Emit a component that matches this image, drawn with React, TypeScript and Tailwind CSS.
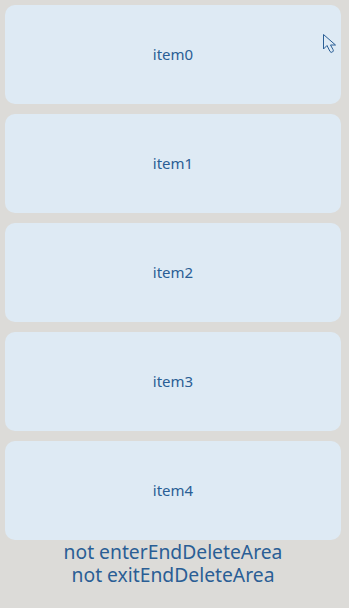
import React from "react";

export default function App() {
  const items = [0, 1, 2, 3, 4];
  return (
    <div className="w-[349px] h-[608px] bg-[#dcdbd8] overflow-hidden relative" style={{ fontFamily: '"Noto Sans", "Open Sans", sans-serif' }}>
      <div className="flex flex-col gap-[10px] px-[5px] pt-[5px] w-[346px]">
        {items.map((i) => (
          <div key={i} className="h-[99px] rounded-[10px] bg-[#deeaf4] flex items-center justify-center">
            <span className="text-[15px] text-[#2a5e95]">item{i}</span>
          </div>
        ))}
      </div>
      <div className="flex flex-col items-center text-[19.3px] leading-[23px] text-[#2a5e95] w-[346px]">
        <span>not enterEndDeleteArea</span>
        <span>not exitEndDeleteArea</span>
      </div>
      <svg className="absolute left-[322px] top-[33px]" width="16" height="21" viewBox="0 0 16 21">
        <path d="M1.5 1.5 L1.5 16 L5 12.5 L8 18.5 Q9 20 10.5 19 Q12 18 11 16.5 L8.5 12 L13.5 12 Z" fill="#deeaf4" stroke="#2a5e95" strokeWidth="1" strokeLinejoin="round" />
      </svg>
    </div>
  );
}
